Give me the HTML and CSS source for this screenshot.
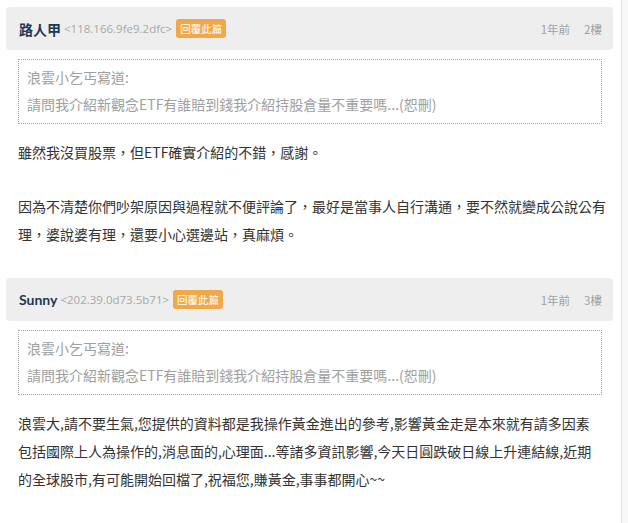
FILE: index.html
```html
<!DOCTYPE html>
<html lang="zh-Hant">
<head>
<meta charset="UTF-8" />
<meta name="viewport" content="width=device-width, initial-scale=1" />
<title>留言</title>
<link rel="stylesheet" href="styles.css">
</head>
<body>
<div class="page">
  <div class="comments">

    <div class="comment">
      <div class="comment-head">
        <span class="author">路人甲</span>
        <span class="ip">&lt;118.166.9fe9.2dfc&gt;</span>
        <span class="reply-btn">回覆此篇</span>
        <span class="meta"><span>1年前</span><span>2樓</span></span>
      </div>
      <div class="quote">
        <div>浪雲小乞丐寫道:</div>
        <div>請問我介紹新觀念ETF有誰賠到錢我介紹持股倉量不重要嗎...(恕刪)</div>
      </div>
      <div class="comment-body">
        <p>雖然我沒買股票，但ETF確實介紹的不錯，感謝。</p>
        <p>因為不清楚你們吵架原因與過程就不便評論了，最好是當事人自行溝通，要不然就變成公說公有<br>
        理，婆說婆有理，還要小心選邊站，真麻煩。</p>
      </div>
    </div>

    <div class="comment">
      <div class="comment-head">
        <span class="author">Sunny</span>
        <span class="ip">&lt;202.39.0d73.5b71&gt;</span>
        <span class="reply-btn">回覆此篇</span>
        <span class="meta"><span>1年前</span><span>3樓</span></span>
      </div>
      <div class="quote">
        <div>浪雲小乞丐寫道:</div>
        <div>請問我介紹新觀念ETF有誰賠到錢我介紹持股倉量不重要嗎...(恕刪)</div>
      </div>
      <div class="comment-body">
        <p>浪雲大,請不要生氣,您提供的資料都是我操作黃金進出的參考,影響黃金走是本來就有請多因素<br>
        包括國際上人為操作的,消息面的,心理面...等諸多資訊影響,今天日圓跌破日線上升連結線,近期<br>
        的全球股市,有可能開始回檔了,祝福您,賺黃金,事事都開心~~</p>
      </div>
    </div>

    <div class="comment-head next"></div>

  </div>
  <div class="side"></div>
</div>
</body>
</html>
```

FILE: styles.css
```css
* { box-sizing: border-box; margin: 0; padding: 0; }
html, body { height: 100%; }
body {
  font-family: "Noto Sans CJK TC", "Liberation Sans", sans-serif;
  background: #fff;
  color: #333;
  overflow: hidden;
}

.page { display: flex; height: 100%; }
.comments { width: 621px; padding: 7px 8px 0 6px; }
.side { flex: 1; border-left: 1px solid #e2e2e2; background: #f8f8f8; }

/* Comment */
.comment { padding-bottom: 30px; }
.comment-head {
  height: 43px;
  background: #eeeeee;
  border-radius: 3px;
  display: flex; align-items: center;
  padding: 0 11px 0 13px;
}
.comment-head.next { height: 10px; border-radius: 3px 3px 0 0; }
.author {
  font-family: "Lato", "Noto Sans CJK TC", sans-serif;
  font-weight: 700; font-size: 14px;
  color: #1d3954;
}
.ip {
  font-family: "Open Sans", sans-serif;
  font-size: 11.5px; color: #a8a8a8;
  margin-left: 3px;
}
.reply-btn {
  margin-left: 4px;
  background: #f0a94a;
  color: #fff;
  font-size: 10.5px;
  line-height: 19px; height: 19px;
  padding: 0 4px;
  border-radius: 3px;
}
.meta {
  margin-left: auto;
  display: flex; gap: 14px;
  font-size: 11.5px; color: #a0a0a0;
}

/* Quote box */
.quote {
  margin: 9px 11px 0 12px;
  height: 65px;
  border: 1px dotted #a5a5a5;
  padding: 4px 8px;
  font-size: 14px; line-height: 27px;
  color: #a0a0a0;
}

.comment-body {
  margin: 14px 12px 0 12px;
  font-size: 14px; line-height: 28px;
  color: #333;
  white-space: nowrap;
}
.comment-body p + p { margin-top: 26px; }
```
